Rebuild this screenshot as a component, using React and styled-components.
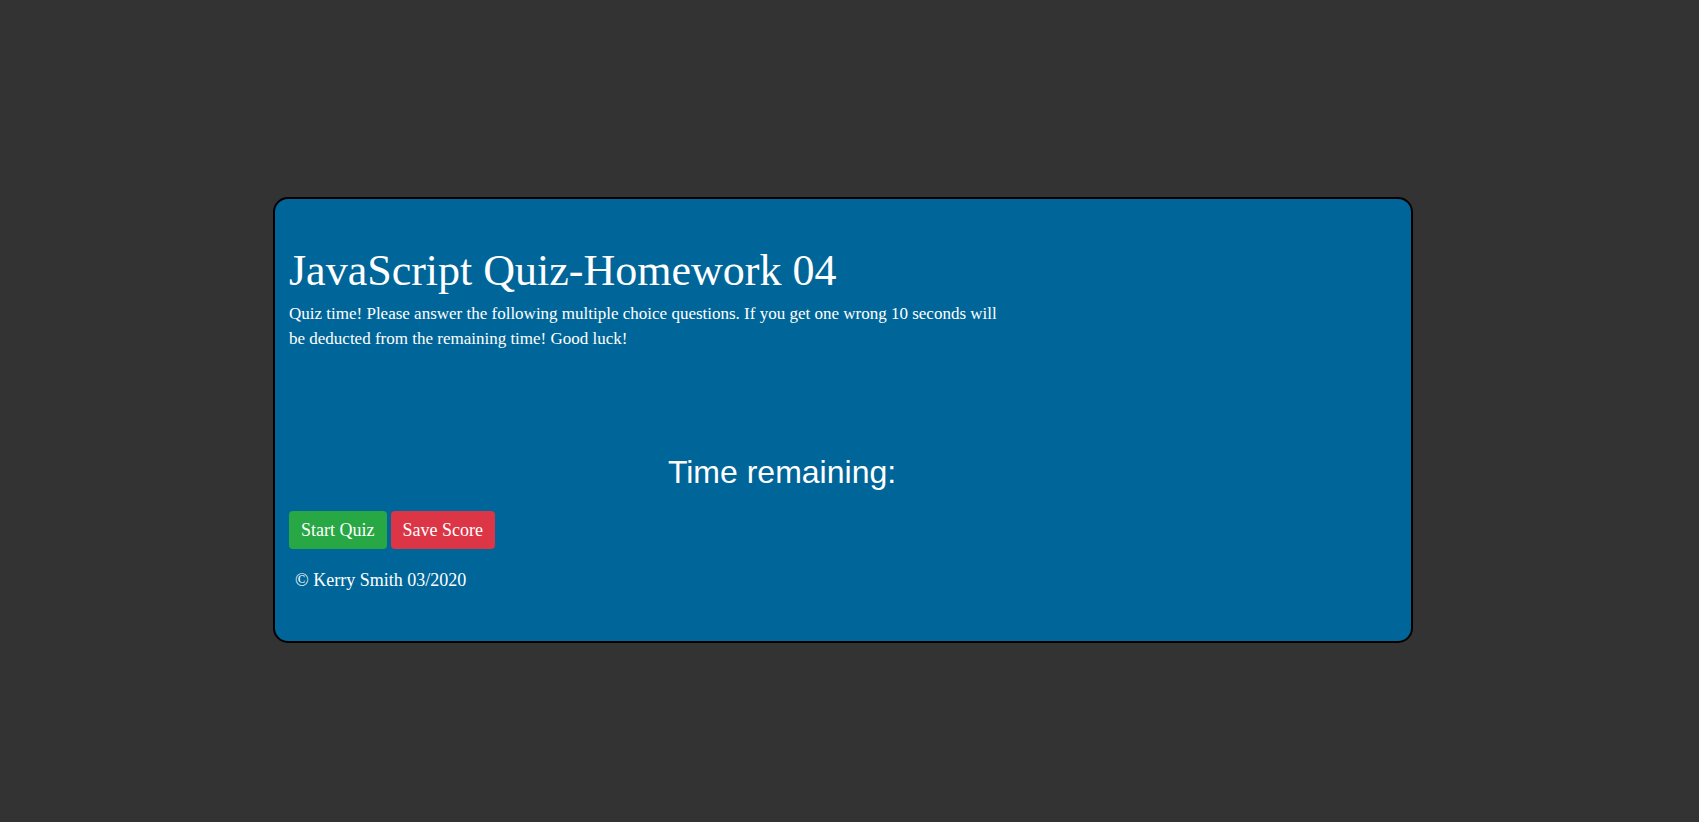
import styled, { createGlobalStyle } from 'styled-components';

const GlobalStyle = createGlobalStyle`
  html, body {
    margin: 0;
    padding: 0;
    background-color: #333333;
  }
  body {
    font-family: "Liberation Serif", "DejaVu Serif", serif;
    color: #ffffff;
  }
  * {
    box-sizing: border-box;
  }
`

const Page = styled.div`
  width: 100%;
  min-height: 822px;
  padding: 197px 0 0 273px;
`

const Card = styled.div`
  width: 1140px;
  height: 446px;
  background-color: #006699;
  border: 2px solid #000;
  border-radius: 15px;
  padding: 47px 14px 0 14px;
`

const Title = styled.h1`
  margin: 0;
  font-size: 44px;
  font-weight: 400;
  line-height: 50px;
`

const Intro = styled.p`
  margin: 5px 0 0 0;
  width: 718px;
  font-size: 17px;
  line-height: 25px;
`

const TimerRow = styled.div`
  width: 986px;
  margin-top: 102px;
  text-align: center;
`

const Timer = styled.h2`
  margin: 0;
  font-family: "Liberation Sans", Arial, sans-serif;
  font-size: 32px;
  font-weight: 400;
  line-height: 38px;
`

const ButtonRow = styled.div`
  display: flex;
  gap: 4px;
  margin-top: 20px;
`

const Button = styled.button`
  height: 38px;
  padding: 0 12px;
  border: none;
  border-radius: 4px;
  font-family: inherit;
  font-size: 18px;
  color: #fff;
  background-color: ${({ variant }) => (variant === 'danger' ? '#dc3545' : '#28a745')};
  cursor: pointer;
`

const Footer = styled.footer`
  margin-top: 19px;
  padding-left: 6px;
  font-size: 18px;
  line-height: 24px;
`

const App = () => {
  return (
    <>
      <GlobalStyle />
      <Page>
        <Card>
          <Title>JavaScript Quiz-Homework 04</Title>
          <Intro>
            Quiz time! Please answer the following multiple choice questions. If you get one wrong 10 seconds will be deducted from the remaining time! Good luck!
          </Intro>
          <TimerRow>
            <Timer>Time remaining:</Timer>
          </TimerRow>
          <ButtonRow>
            <Button>Start Quiz</Button>
            <Button variant="danger">Save Score</Button>
          </ButtonRow>
          <Footer>© Kerry Smith 03/2020</Footer>
        </Card>
      </Page>
    </>
  )
}

export default App;
